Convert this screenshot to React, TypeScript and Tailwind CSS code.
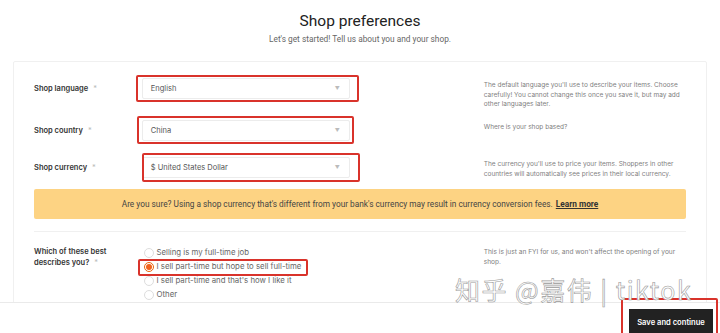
import React from "react";

const FIELDS = [
  {
    label: "Shop language",
    value: "English",
    help: "The default language you'll use to describe your items. Choose carefully! You cannot change this once you save it, but may add other languages later.",
    mark: "-left-[6px] -right-[9px] -top-[3px] -bottom-[3px]",
    rowH: "h-[42px]",
  },
  {
    label: "Shop country",
    value: "China",
    help: "Where is your shop based?",
    mark: "-left-[5px] -right-[4px] -top-[4px] -bottom-[3px]",
    rowH: "h-[37px]",
  },
  {
    label: "Shop currency",
    value: "$ United States Dollar",
    help: "The currency you'll use to price your items. Shoppers in other countries will automatically see prices in their local currency.",
    mark: "-left-[0px] -right-[10px] -top-[4px] -bottom-[4px]",
    rowH: "h-[33px]",
  },
];

const OPTIONS = [
  "Selling is my full-time job",
  "I sell part-time but hope to sell full-time",
  "I sell part-time and that's how I like it",
  "Other",
];

function Select({ value }: { value: string }) {
  return (
    <div className="flex h-[21px] w-[208px] items-center justify-between rounded-[2px] border border-[#ececec] bg-white pl-2 pr-[9px] text-[7.5px] text-[#555]">
      <span>{value}</span>
      <span className="text-[5px] text-[#bbb]">▼</span>
    </div>
  );
}

export default function App() {
  return (
    <div
      className="relative h-[333px] w-[720px] overflow-hidden bg-white"
      style={{ fontFamily: "Inter, 'Noto Sans', sans-serif" }}
    >
      <div className="flex flex-col items-center pt-[10px]">
        <h1 className="font-['Roboto'] text-[15.5px] leading-[22px] text-[#222]">Shop preferences</h1>
        <p className="mt-[2px] font-['Roboto'] text-[8.3px] leading-[10px] text-[#666]">
          Let's get started! Tell us about you and your shop.
        </p>
      </div>

      <div className="mx-[13px] mt-[17px] h-[300px] rounded-[2px] border border-[#f0f0f0] bg-white px-[20px] pt-[16px]">
        {FIELDS.map((f) => (
          <div key={f.label} className={`flex items-start ${f.rowH}`}>
            <div className="flex h-[21px] w-[113px] items-center text-[7.5px] font-semibold text-[#333]">
              {f.label}
              <span className="ml-[5px] font-normal text-[#bbb]">*</span>
            </div>
            <div className="relative">
              <Select value={f.value} />
              <div className={`absolute rounded-[2px] border-2 border-[#d9332b] ${f.mark}`} />
            </div>
            <p className="ml-[134px] mt-[3px] w-[212px] text-[6.5px] leading-[9.5px] text-[#808080]">{f.help}</p>
          </div>
        ))}

        <div className="mt-[-1px] flex h-[30px] items-center justify-center rounded-[2px] bg-[#fdd383] font-['Roboto'] text-[8.3px] text-[#444]">
          Are you sure? Using a shop currency that's different from your bank's currency may result in currency conversion fees.
          <span className="ml-[3px] font-bold text-[#333] underline">Learn more</span>
        </div>

        <div className="mt-[12px] h-px bg-[#f0f0f0]" />

        <div className="mt-[14px] flex items-start">
          <div className="w-[111px] text-[7.5px] font-semibold leading-[11px] text-[#333]">
            Which of these best
            <br />
            describes you?<span className="ml-[5px] font-normal text-[#bbb]">*</span>
          </div>
          <div className="flex w-[210px] flex-col">
            {OPTIONS.map((o, i) => (
              <div key={o} className="relative flex h-[14px] items-center gap-[3px] text-[7.8px] text-[#666]">
                <span
                  className={`flex h-[10px] w-[10px] items-center justify-center rounded-full border ${
                    i === 1 ? "border-[#e8650b]" : "border-[#ddd]"
                  } bg-white`}
                >
                  {i === 1 && <span className="h-[6px] w-[6px] rounded-full bg-[#f1641e]" />}
                </span>
                {o}
                {i === 1 && (
                  <div className="absolute -left-[6px] -top-[1px] h-[17px] w-[170px] rounded-[2px] border-2 border-[#d9332b]" />
                )}
              </div>
            ))}
          </div>
          <p className="ml-[133px] mt-[1px] w-[205px] text-[6.6px] leading-[10px] text-[#808080]">
            This is just an FYI for us, and won't affect the opening of your shop.
          </p>
        </div>
      </div>

      <div className="absolute bottom-0 left-0 right-0 flex h-[31px] justify-end border-t border-[#eaeaea] bg-white pr-[7px] pt-[6px]">
        <div className="relative">
          <button className="flex h-[28px] w-[84px] items-center justify-center bg-[#222] text-[7.6px] font-semibold text-white">
            Save and continue
          </button>
          <div className="absolute -left-[8px] -right-[5px] -top-[11px] bottom-[-6px] rounded-[2px] border-2 border-[#d9332b]" />
        </div>
      </div>

      <div className="pointer-events-none absolute left-[455px] top-[275px] whitespace-nowrap font-['Noto_Sans_CJK_SC',sans-serif] text-[25px] leading-[28px] tracking-[1.5px] text-white [-webkit-text-stroke:0.6px_#9a9a9a]">
        知乎 @嘉伟 | tiktok
      </div>
    </div>
  );
}
